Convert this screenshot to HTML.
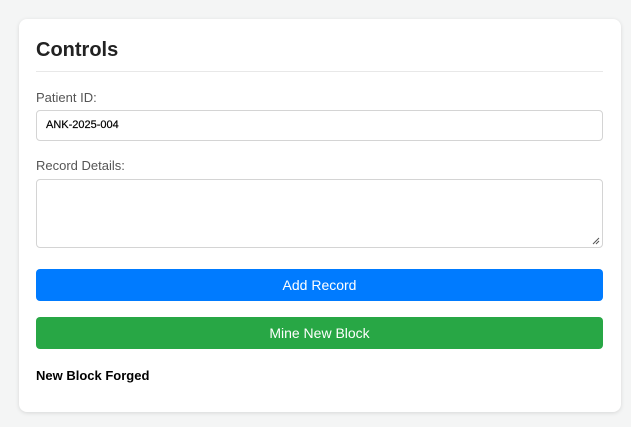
<!DOCTYPE html>
<html><head><style>
body{margin:0;background:#f4f5f5;font-family:"Liberation Sans",sans-serif;width:631px;height:427px;overflow:hidden}
.card{position:absolute;left:19px;top:19px;width:602px;height:393px;background:#fff;border-radius:8px;box-shadow:0 1px 4px rgba(0,0,0,.12)}
.a{position:absolute;left:17px}
h2{margin:0;font-family:"Liberation Sans",sans-serif;font-size:20px;font-weight:bold;color:#222;top:20px}
.hr{top:52px;width:567px;height:1px;background:#e8e8e8}
.lbl{font-family:"Liberation Sans",sans-serif;font-size:13px;color:#555}
.box{width:565px;border:1px solid #d4d4d4;border-radius:4px;background:#fff}
.btn{width:567px;height:32px;border-radius:4px;color:#fff;font-size:14px;text-align:center;line-height:32px}
</style></head><body>
<div class="card">
<h2 class="a">Controls</h2>
<div class="a hr"></div>
<div class="a lbl" style="top:71px">Patient ID:</div>
<div class="a box" style="top:91px;height:29px;font-size:11px;line-height:29px;"><span style="padding-left:9px;color:#000;-webkit-text-stroke:0.2px #000">ANK-2025-004</span></div>
<div class="a lbl" style="top:139px">Record Details:</div>
<div class="a box" style="top:160px;height:67px"><svg style="position:absolute;right:2px;bottom:2px" width="8" height="8"><path d="M1 7L7 1M4 7L7 4" stroke="#555" stroke-width="1"/></svg></div>
<div class="a btn" style="top:250px;background:#007bff">Add Record</div>
<div class="a btn" style="top:298px;background:#28a745">Mine New Block</div>
<div class="a" style="top:349px;font-size:13px;font-weight:bold;color:#000">New Block Forged</div>
</div>
</body></html>
